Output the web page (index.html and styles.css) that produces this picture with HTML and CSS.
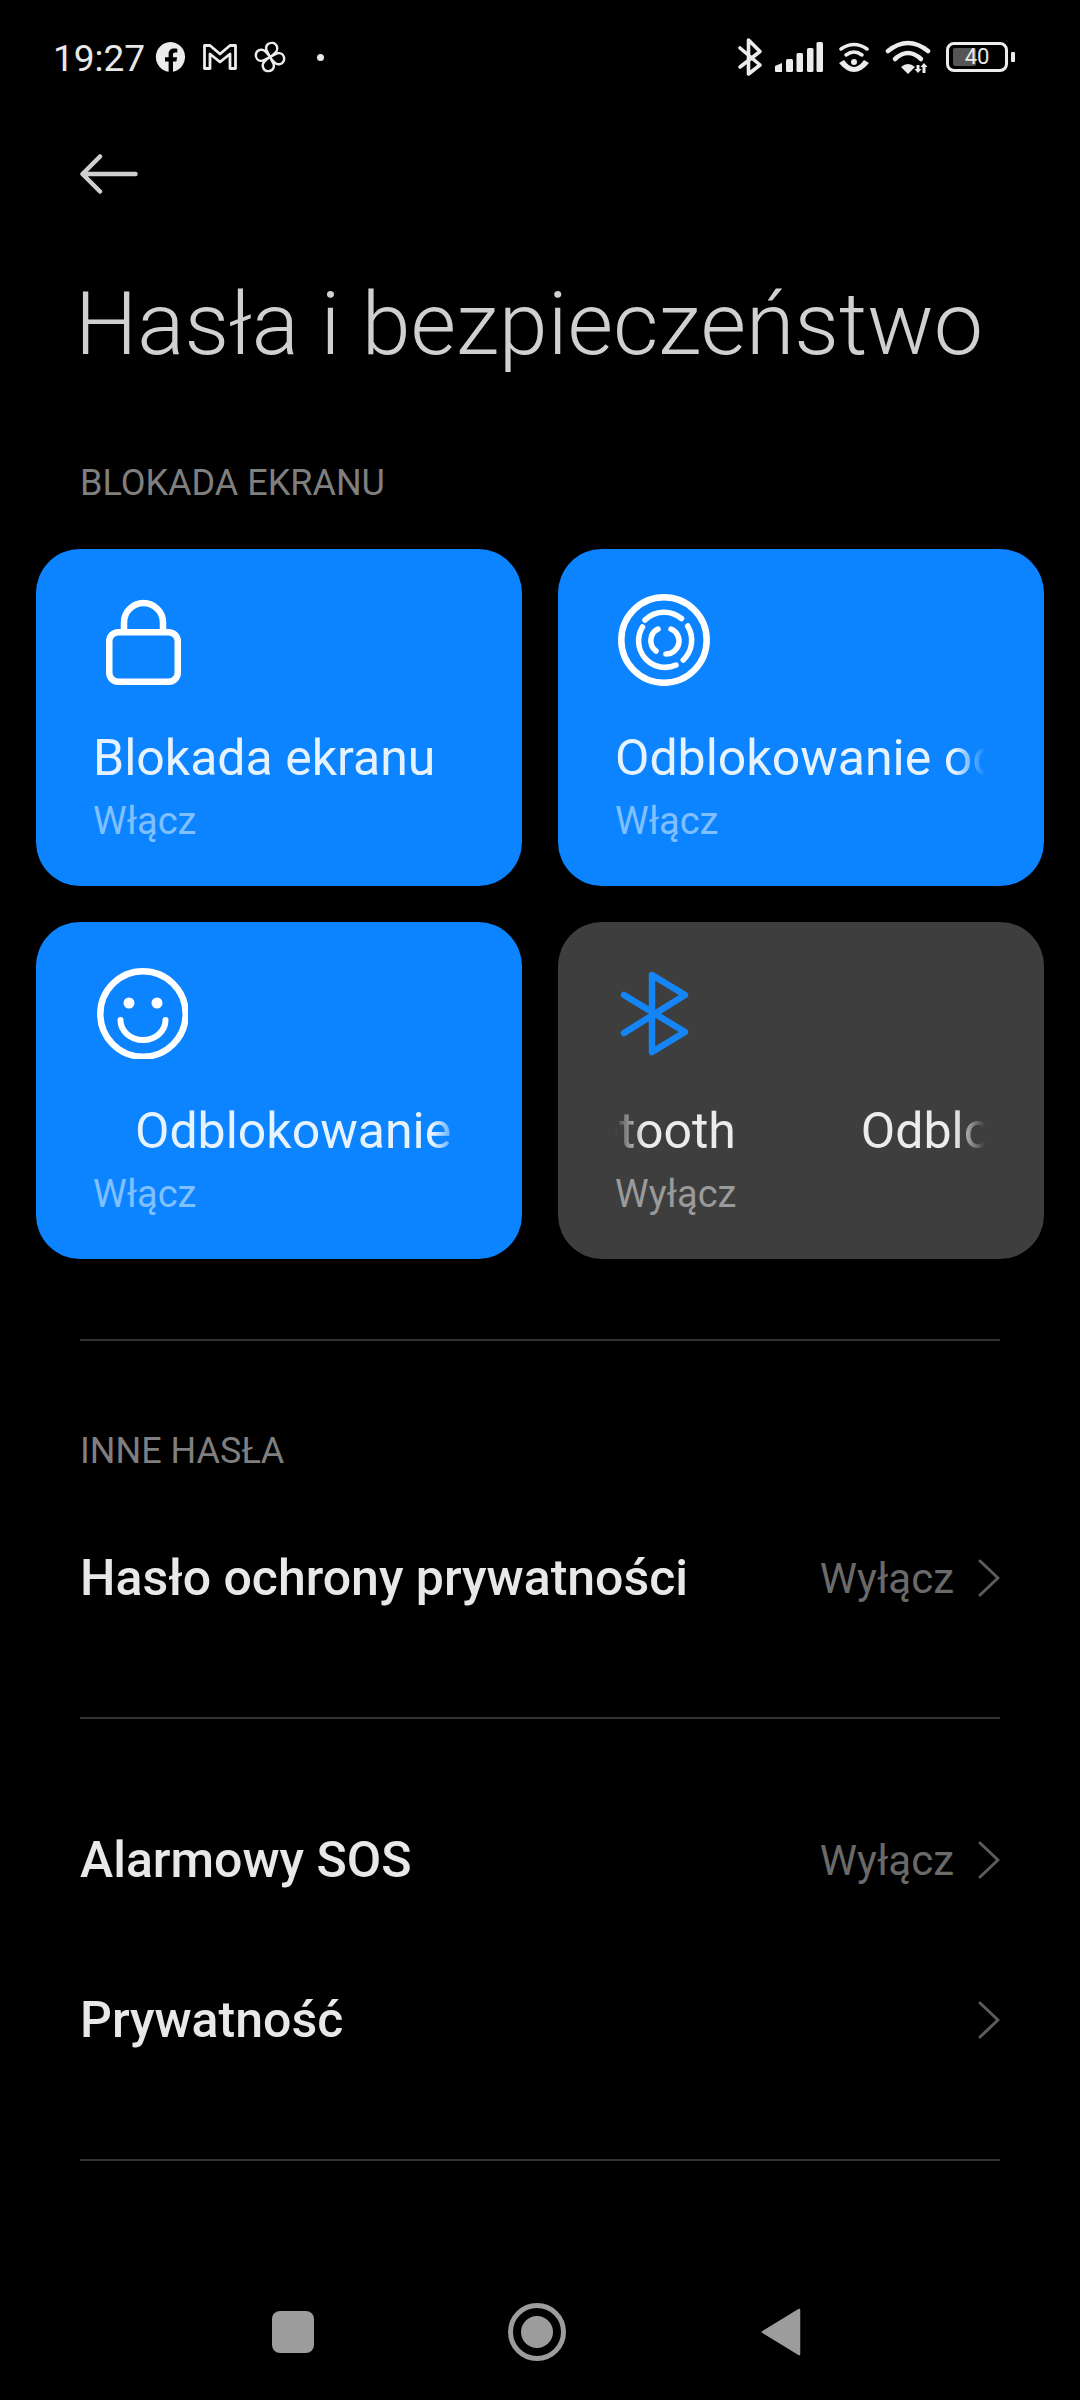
FILE: index.html
```html
<!DOCTYPE html>
<html lang="pl">
<head>
<meta charset="utf-8">
<title>Hasła i bezpieczeństwo</title>
<link rel="stylesheet" href="styles.css">
</head>
<body>
<div class="screen">
  <header class="status">
    <div class="status-left">
      <span class="time">19:27</span>
      <svg class="s-fb" viewBox="0 0 30 30"><path class="fill" fill-rule="evenodd" d="M15 0a15 15 0 0 1 3 29.700V19.500h3.400l.7-4.200H18v-2.600c0-1.300.6-2.200 2.300-2.200h2V6.800c-1-.1-2.200-.3-3.200-.3-3.400 0-5.500 2-5.500 5.600v3.200H10v4.200h3.600v10.300A15 15 0 0 1 15 0z"/></svg>
      <svg class="s-m" viewBox="0 0 34 26"><path class="line" stroke-width="2.800" stroke-linejoin="round" d="M1.500 1.500h5.500l10 8.500 10-8.500h5.500v23h-5.500V10l-10 8-10-8v14.500H1.500z"/></svg>
      <svg class="s-pin" viewBox="0 0 34 34"><g class="line" stroke-width="2.500" stroke-linejoin="round"><path d="M17 17L13 9C12 4 16 1.500 20 2C25 3 26 9 23 12C21 14 19 16 17 17z"/><path d="M17 17L13 9C12 4 16 1.500 20 2C25 3 26 9 23 12C21 14 19 16 17 17z" transform="rotate(90 17 17)"/><path d="M17 17L13 9C12 4 16 1.500 20 2C25 3 26 9 23 12C21 14 19 16 17 17z" transform="rotate(180 17 17)"/><path d="M17 17L13 9C12 4 16 1.500 20 2C25 3 26 9 23 12C21 14 19 16 17 17z" transform="rotate(270 17 17)"/></g></svg>
      <span class="dot"></span>
    </div>
    <div class="status-right">
      <svg class="s-bt" viewBox="0 0 26 40"><path class="line" stroke-width="3.600" stroke-linecap="round" stroke-linejoin="round" d="M3 11L23 28 11.500 37V3L23 14.500 3 30"/></svg>
      <svg class="s-sig" viewBox="0 0 48 30"><g class="fill"><path d="M0 24l7-3v9H1a1 1 0 0 1-1-1z"/><rect x="11" y="17" width="7" height="13" rx="1.500"/><rect x="21.500" y="11" width="6.500" height="19" rx="1.500"/><rect x="32" y="6" width="6.500" height="24" rx="1.500"/><rect x="41.500" y="0" width="6.500" height="30" rx="1.500"/></g></svg>
      <svg class="s-hot" viewBox="0 0 32 32"><g class="line" stroke-width="3.500" stroke-linecap="round"><path d="M3 8Q16 -1 29 8"/><path d="M8 14Q16 8 24 14"/></g><circle class="fill" cx="16" cy="21" r="3"/><path class="fill" d="M1 22L6 19Q16 33 26 19L31 22Q16 40 1 22z"/></svg>
      <svg class="s-wifi" viewBox="0 0 46 34"><g class="line" stroke-width="4.500" stroke-linecap="round"><path d="M3 11Q23 -5 43 11"/><path d="M10 19Q23 7 36 19"/></g><path class="fill" d="M16 27Q23 21 30 27L23 34z"/><path class="fill" d="M33 33l-3.500-4h2v-4h3v4h2zM39 23l3.500 4h-2v6h-3v-6h-2z"/></svg>
      <div class="battery">
        <div class="cell"><span class="charge"></span><span class="level">40</span></div>
        <span class="nub"></span>
      </div>
    </div>
  </header>

  <div class="back">
    <svg viewBox="0 0 58 40"><path d="M20 2.500L2.500 20 20 37.500M3 20h52.500" fill="none" stroke="#cfcfcf" stroke-width="4.500" stroke-linecap="round" stroke-linejoin="round"/></svg>
  </div>

  <h1 class="page-title">Hasła i bezpieczeństwo</h1>

  <p class="section first">BLOKADA EKRANU</p>

  <section class="grid">
    <article class="card">
      <svg class="c-icon" viewBox="0 0 92 92"><g fill="none" stroke="#fff" stroke-width="6.500"><path d="M28 38V28.500a19.500 19.500 0 0 1 39 0V38"/><rect x="13.250" y="38.250" width="68.500" height="49.500" rx="9"/></g></svg>
      <div class="c-title"><div class="track">Blokada ekranu</div></div>
      <div class="c-sub">Włącz</div>
    </article>
    <article class="card">
      <svg class="c-icon" viewBox="0 0 92 92"><g fill="none" stroke="#fff" stroke-linecap="round"><circle cx="46" cy="46" r="42.700" stroke-width="6.500"/><g stroke-width="5.500"><path d="M27 26A27.500 27.500 0 0 1 63.500 24.500"/><path d="M69.700 32A27.500 27.500 0 0 1 65.300 66"/><path d="M24.500 33A26.500 26.500 0 0 0 58 71"/><path d="M40 35A13 13 0 0 0 38 57"/><path d="M53 35A13 13 0 0 1 48 60"/></g></g></svg>
      <div class="c-title"><div class="track">Odblokowanie odciskiem palca</div></div>
      <div class="c-sub">Włącz</div>
    </article>
    <article class="card">
      <svg class="c-icon" viewBox="0 0 92 92"><g fill="none" stroke="#fff"><circle cx="47" cy="47" r="42.700" stroke-width="6.500"/><path d="M24.500 53a22.500 20 0 0 0 45 0" stroke-width="6" stroke-linecap="round"/></g><circle cx="33" cy="36" r="5.500" fill="#fff"/><circle cx="61" cy="36" r="5.500" fill="#fff"/></svg>
      <div class="c-title"><div class="track shift-face">Odblokowanie twarzą</div></div>
      <div class="c-sub">Włącz</div>
    </article>
    <article class="card off">
      <svg class="c-icon" viewBox="0 0 92 92"><path d="M6 28L67 65 34 85V8L67 28 6 66" fill="none" stroke="#1585f5" stroke-width="6.500" stroke-linecap="round" stroke-linejoin="round"/></svg>
      <div class="c-title scrolled"><div class="track shift-bt"><span>Odblokowanie Bluetooth</span><span>Odblokowanie Bluetooth</span></div></div>
      <div class="c-sub">Wyłącz</div>
    </article>
  </section>

  <hr class="rule rule-a">

  <p class="section second">INNE HASŁA</p>

  <div class="row row-a">
    <span class="r-label">Hasło ochrony prywatności</span>
    <span class="r-val">Wyłącz</span>
    <svg class="chev" viewBox="0 0 22 38"><path d="M2 2l18 17L2 36"/></svg>
  </div>

  <hr class="rule rule-b">

  <div class="row row-b">
    <span class="r-label">Alarmowy SOS</span>
    <span class="r-val">Wyłącz</span>
    <svg class="chev" viewBox="0 0 22 38"><path d="M2 2l18 17L2 36"/></svg>
  </div>
  <div class="row">
    <span class="r-label">Prywatność</span>
    <svg class="chev" viewBox="0 0 22 38"><path d="M2 2l18 17L2 36"/></svg>
  </div>

  <hr class="rule rule-c">

  <nav class="navbar">
    <span class="n-square"></span>
    <span class="n-home"><span></span></span>
    <svg class="n-back" viewBox="0 0 40 48"><path d="M38 2L2 24l36 22z" fill="#9c9c9c" stroke="#9c9c9c" stroke-width="2.500" stroke-linejoin="round"/></svg>
  </nav>
</div>
</body>
</html>
```

FILE: styles.css
```css
* { box-sizing: border-box; }
html, body { margin: 0; background: #000; }
body { font-family: Roboto, "Noto Sans", sans-serif; color: #f0f0f0; }
.screen { width: 1080px; height: 2400px; overflow: hidden; background: #000; }

.fill { fill: #ececec; }
.line { fill: none; stroke: #ececec; }

.status { height: 114px; padding: 0 65px 0 53px; display: flex; justify-content: space-between; align-items: center; }
.status-left, .status-right { display: flex; align-items: center; }
.time { font-size: 37px; color: #e8e8e8; line-height: 44px; margin-top: 4px; }
.s-fb { width: 30px; height: 30px; margin-left: 10px; }
.s-m { width: 34px; height: 26px; margin-left: 18px; }
.s-pin { width: 32px; height: 32px; margin-left: 17px; }
.dot { width: 7px; height: 7px; border-radius: 50%; background: #e8e8e8; margin-left: 31px; }
.s-bt { width: 26px; height: 40px; }
.s-sig { width: 48px; height: 30px; margin-left: 12px; }
.s-hot { width: 32px; height: 32px; margin-left: 15px; }
.s-wifi { width: 46px; height: 34px; margin-left: 15px; }
.battery { display: flex; align-items: center; margin-left: 15px; }
.cell { width: 62px; height: 30px; border: 3px solid #ececec; border-radius: 8px; position: relative; display: flex; align-items: center; justify-content: center; }
.charge { position: absolute; left: 4px; top: 3px; bottom: 3px; width: 23px; background: #555; border-radius: 2px; }
.level { position: relative; font-size: 22px; line-height: 24px; color: #e8e8e8; }
.nub { width: 4px; height: 10px; background: #ececec; margin-left: 3px; border-radius: 1px; }

.back { margin: 40px 0 0 80px; height: 40px; }
.back svg { width: 58px; height: 40px; display: block; }

.page-title { margin: 80px 0 0 75px; font-size: 88px; line-height: 100px; font-weight: 300; color: #d0d0d0; white-space: nowrap; }

.section { margin: 0 0 0 80px; font-size: 36px; line-height: 44px; color: #7f7f7f; }
.section.first { margin-top: 87px; }
.section.second { margin-top: 88px; }

.grid { margin: 44px 36px 0; display: grid; grid-template-columns: 486px 486px; grid-auto-rows: 337px; column-gap: 36px; row-gap: 36px; }
.card { background: #0d84ff; border-radius: 44px; padding: 45px 0 0 57px; overflow: hidden; }
.card.off { background: #3e3e3e; }
.c-icon { display: block; width: 92px; height: 92px; margin-left: 3px; }
.c-title { margin-top: 42px; width: 370px; overflow: hidden; font-size: 50px; line-height: 60px; color: #e6f3ff;
  -webkit-mask-image: linear-gradient(to right, #000 340px, transparent 100%);
  mask-image: linear-gradient(to right, #000 340px, transparent 100%); }
.c-title.scrolled {
  -webkit-mask-image: linear-gradient(to right, transparent 0, #000 28px, #000 340px, transparent 100%);
  mask-image: linear-gradient(to right, transparent 0, #000 28px, #000 340px, transparent 100%); }
.track { white-space: nowrap; display: flex; gap: 125px; }
.shift-face { margin-left: 42px; }
.shift-bt { margin-left: -422px; }
.c-sub { font-size: 38px; line-height: 44px; margin-top: 11px; color: #80c0ff; }
.off .c-sub { color: #9a9a9a; }
.off .c-title { color: #ececec; }

.rule { margin: 0 80px; border: 0; height: 2px; background: #333; }
.rule-a { margin-top: 80px; }
.rule-b { margin-top: 59px; }
.rule-c { margin-top: 59px; }

.row { margin: 0 80px; display: flex; align-items: center; height: 160px; }
.row-a { margin-top: 25px; }
.row-b { margin-top: 61px; }
.r-label { flex: 1; font-size: 50px; font-weight: 500; color: #e8e8e8; white-space: nowrap; }
.r-val { font-size: 42px; color: #6a6a6a; }
.chev { width: 22px; height: 38px; margin-left: 24px; }
.chev path { fill: none; stroke: #5c5c5c; stroke-width: 3; stroke-linecap: round; stroke-linejoin: round; }

.navbar { margin-top: 141px; height: 60px; display: flex; align-items: center; }
.n-square { width: 42px; height: 42px; background: #9c9c9c; border-radius: 8px; margin-left: 272px; }
.n-home { width: 58px; height: 58px; border: 5px solid #9c9c9c; border-radius: 50%; margin-left: 194px; display: flex; align-items: center; justify-content: center; }
.n-home span { width: 32px; height: 32px; background: #9c9c9c; border-radius: 50%; }
.n-back { width: 40px; height: 48px; margin-left: 195px; }
```
